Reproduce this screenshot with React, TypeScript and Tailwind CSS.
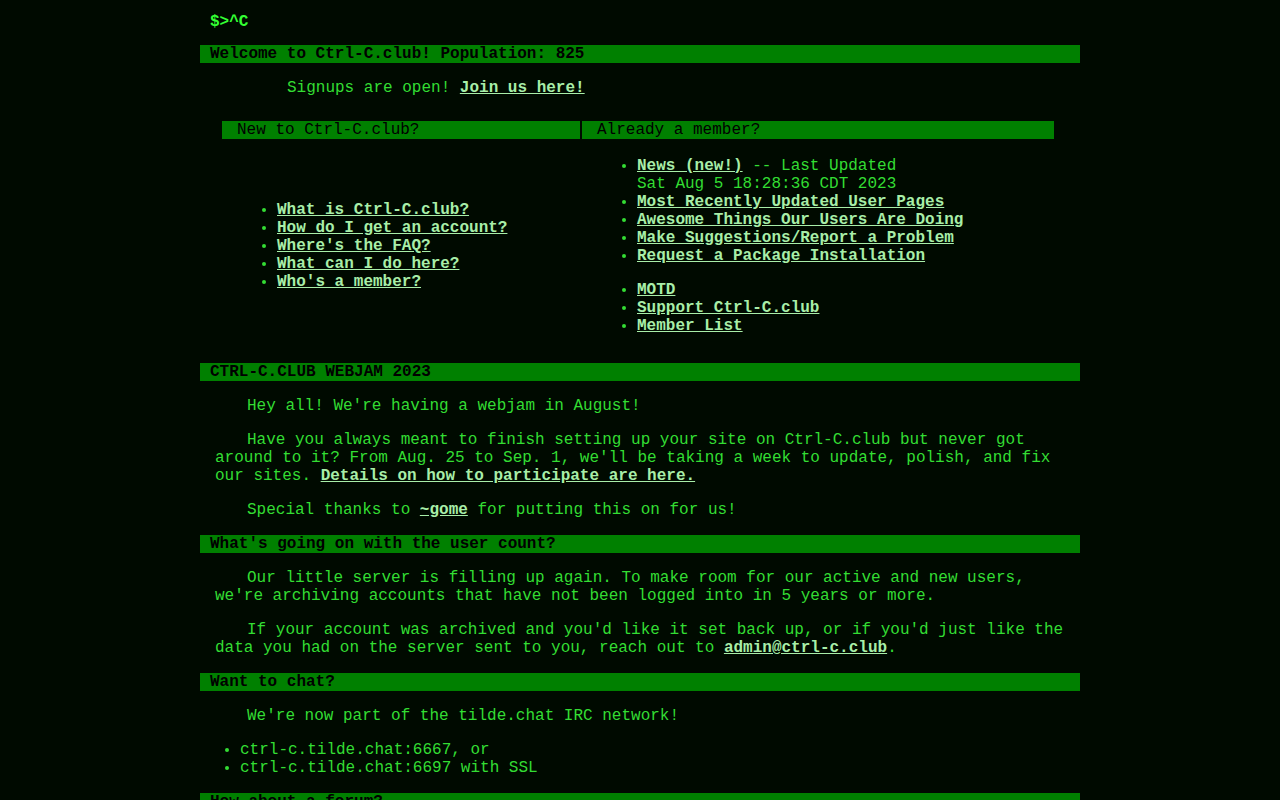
const linkCls = "font-bold text-[#a8eea8] underline";

function Bar({ children, bold = true }: { children: React.ReactNode; bold?: boolean }) {
  return (
    <h2 className={`h-[18px] bg-[#008000] pl-[10px] text-black ${bold ? "font-bold" : "font-normal"}`}>
      {children}
    </h2>
  );
}

function P({ children }: { children: React.ReactNode }) {
  return <p className="mt-4 px-[15px] indent-8">{children}</p>;
}

const NEW_LINKS = [
  "What is Ctrl-C.club?",
  "How do I get an account?",
  "Where's the FAQ?",
  "What can I do here?",
  "Who's a member?",
];

const MEMBER_LINKS = [
  "Most Recently Updated User Pages",
  "Awesome Things Our Users Are Doing",
  "Make Suggestions/Report a Problem",
  "Request a Package Installation",
];

export default function App() {
  return (
    <div className="min-h-screen bg-[#000a00] font-['Liberation_Mono',monospace] text-[16px] leading-[18px] text-[#33dd33]">
      <div className="mx-auto w-[880px] pt-[13px] pb-10">
        <div className="pl-[10px] font-bold text-[#33ff33]">$&gt;^C</div>

        <div className="mt-[14px]">
          <Bar>Welcome to Ctrl-C.club! Population: 825</Bar>
        </div>
        <p className="mt-4 pl-[87px]">
          Signups are open! <a href="#" className={linkCls}>Join us here!</a>
        </p>

        {/* two column table */}
        <div className="mt-6 ml-[22px] flex gap-[2px]">
          <div className="flex w-[358px] flex-col">
            <div className="h-[18px] bg-[#008000] pl-[15px] text-black">New to Ctrl-C.club?</div>
            <div className="flex flex-1 items-center">
              <ul className="list-disc pl-[55px]">
                {NEW_LINKS.map((l) => (
                  <li key={l}>
                    <a href="#" className={linkCls}>{l}</a>
                  </li>
                ))}
              </ul>
            </div>
          </div>
          <div className="flex w-[472px] flex-col pb-[18px]">
            <div className="h-[18px] bg-[#008000] pl-[15px] text-black">Already a member?</div>
            <ul className="mt-[18px] list-disc pl-[55px]">
              <li>
                <a href="#" className={linkCls}>News (new!)</a> -- Last Updated
                <br />
                Sat Aug 5 18:28:36 CDT 2023
              </li>
              {MEMBER_LINKS.map((l) => (
                <li key={l}>
                  <a href="#" className={linkCls}>{l}</a>
                </li>
              ))}
            </ul>
            <ul className="mt-4 list-disc pl-[55px]">
              <li><a href="#" className={linkCls}>MOTD</a></li>
              <li><a href="#" className={linkCls}>Support Ctrl-C.club</a></li>
              <li><a href="#" className={linkCls}>Member List</a></li>
            </ul>
          </div>
        </div>

        <div className="mt-[10px]">
          <Bar>CTRL-C.CLUB WEBJAM 2023</Bar>
        </div>
        <P>Hey all! We're having a webjam in August!</P>
        <P>
          Have you always meant to finish setting up your site on Ctrl-C.club but never got around to it? From Aug. 25
          to Sep. 1, we'll be taking a week to update, polish, and fix our sites.{" "}
          <a href="#" className={linkCls}>Details on how to participate are here.</a>
        </P>
        <P>
          Special thanks to <a href="#" className={linkCls}>~gome</a> for putting this on for us!
        </P>

        <div className="mt-4">
          <Bar>What's going on with the user count?</Bar>
        </div>
        <P>
          Our little server is filling up again. To make room for our active and new users, we're archiving accounts
          that have not been logged into in 5 years or more.
        </P>
        <P>
          If your account was archived and you'd like it set back up, or if you'd just like the data you had on the
          server sent to you, reach out to <a href="#" className={linkCls}>admin@ctrl-c.club</a>.
        </P>

        <div className="mt-4">
          <Bar>Want to chat?</Bar>
        </div>
        <P>We're now part of the tilde.chat IRC network!</P>
        <ul className="mt-4 list-disc pl-10">
          <li>ctrl-c.tilde.chat:6667, or</li>
          <li>ctrl-c.tilde.chat:6697 with SSL</li>
        </ul>

        <div className="mt-4">
          <Bar>How about a forum?</Bar>
        </div>
        <P>
          We've got one of those too! Check out the <a href="#" className={linkCls}>Ctrl-C.club forum</a>.
        </P>
      </div>
    </div>
  );
}
